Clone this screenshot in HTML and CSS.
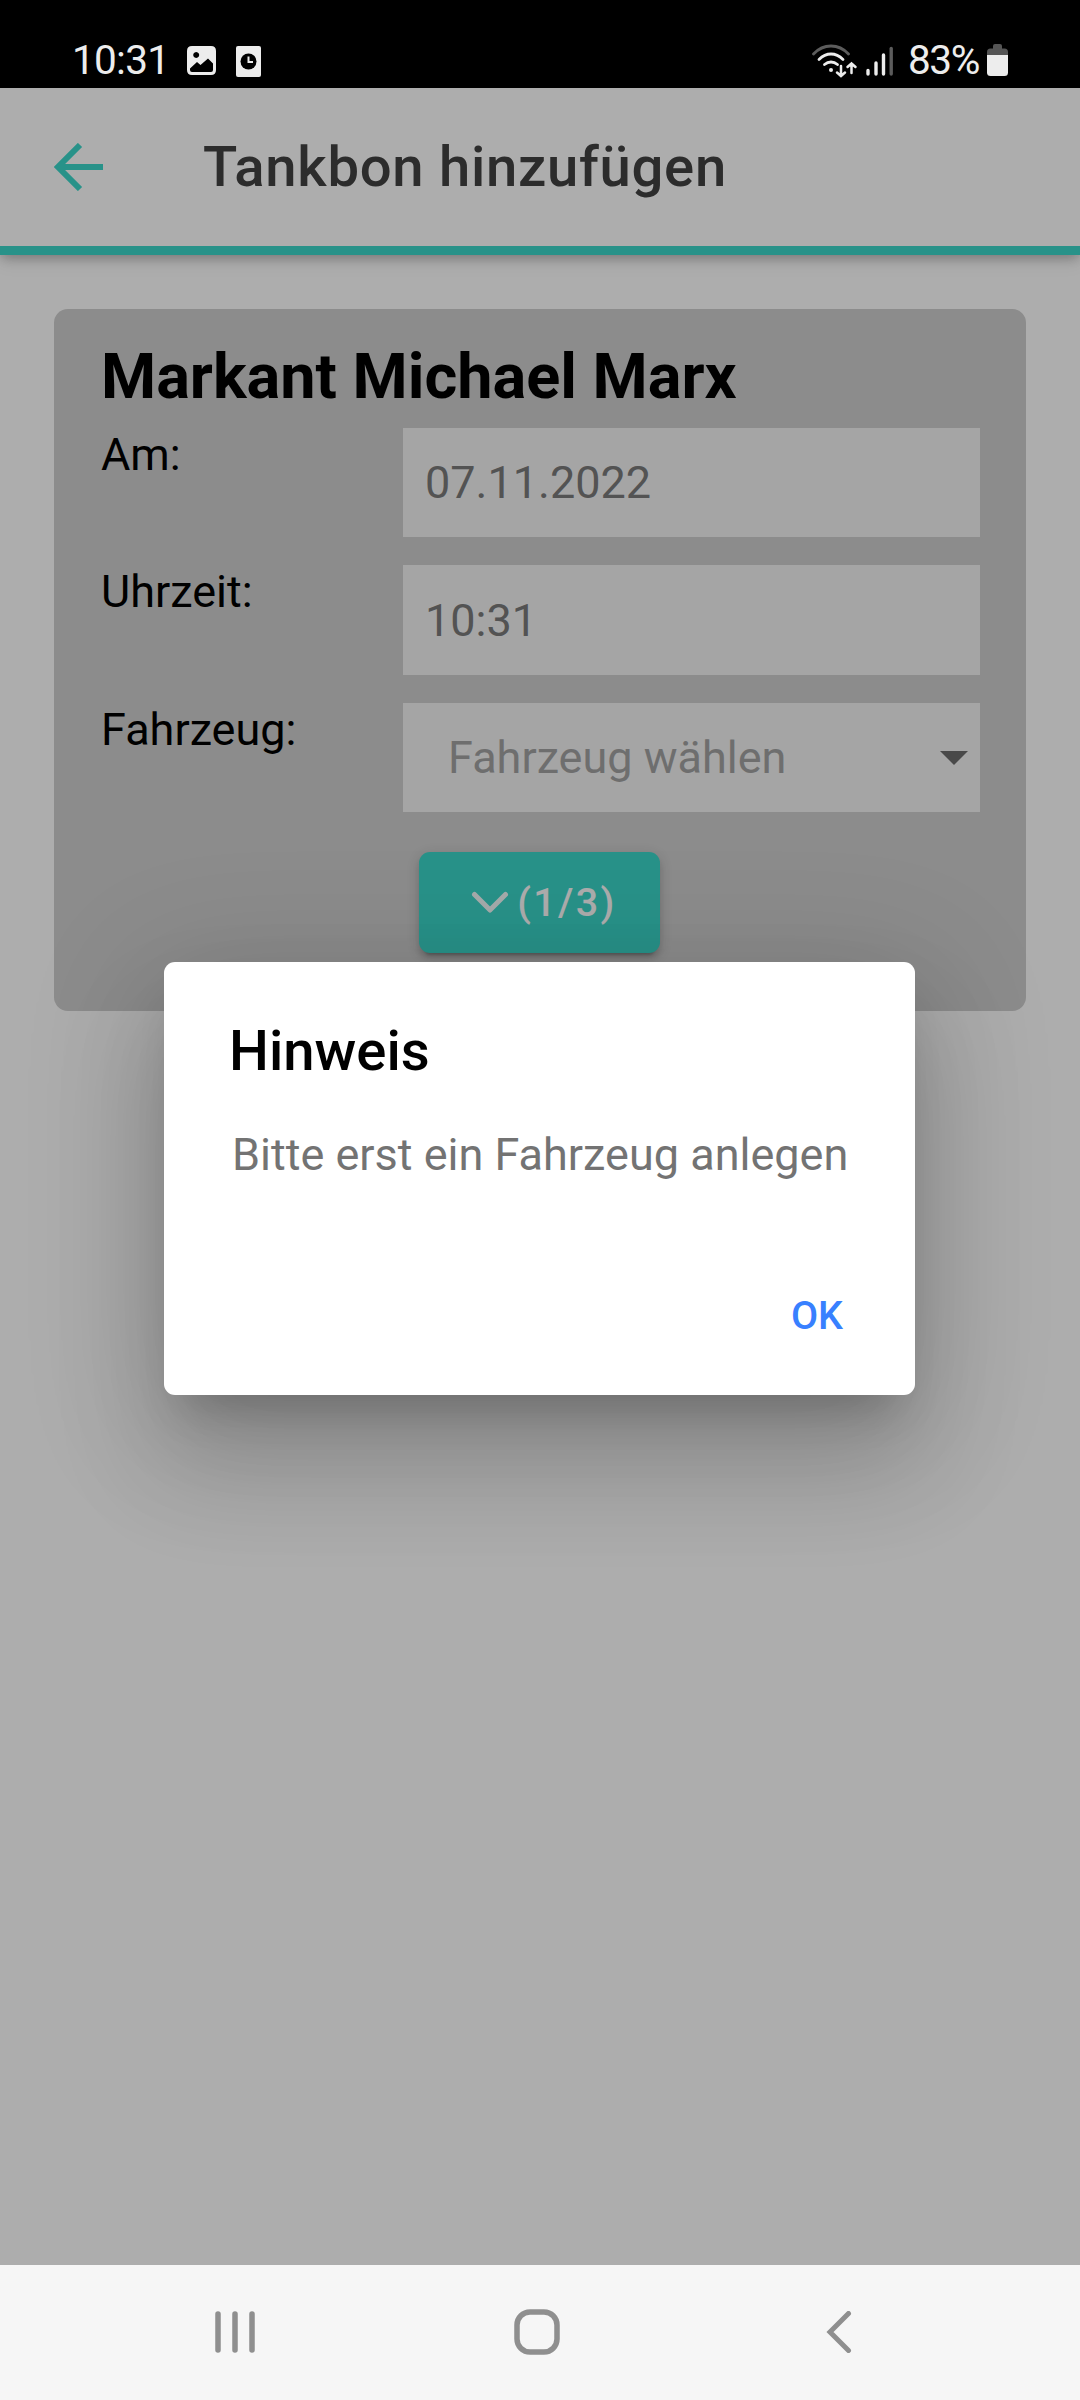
FILE: index.html
```html
<!DOCTYPE html>
<html lang="de">
<head>
<meta charset="utf-8">
<title>Tankbon hinzufügen</title>
<link rel="stylesheet" href="styles.css">
</head>
<body>
<div class="status">
  <span class="status-time">10:31</span>
  <svg class="ic-image" width="29" height="29" viewBox="0 0 29 29">
    <path fill="#ededed" fill-rule="evenodd" d="M5 0H24Q29 0 29 5V24Q29 29 24 29H5Q0 29 0 24V5Q0 0 5 0ZM9.200 6a3 3 0 1 0 .01 0ZM3 22.500L10 16L13.500 19L21 12.500L26 17.500V24Q26 26 24 26H5Q3 26 3 24Z"/>
  </svg>
  <svg class="ic-clock" width="25" height="31" viewBox="0 0 25 31">
    <rect width="25" height="31" rx="2" fill="#ededed"/>
    <circle cx="12.500" cy="15.500" r="8" fill="#000"/>
    <path d="M12.500 10.500V16H17" fill="none" stroke="#ededed" stroke-width="2"/>
  </svg>
  <span class="status-fill"></span>
  <svg class="ic-wifi" width="46" height="34" viewBox="0 0 46 34" fill="none" stroke="#ededed" stroke-width="2.800" stroke-linecap="round">
    <path d="M1.500 10Q9 2 19 2T36.500 10" stroke="#5c5c5c"/>
    <path d="M7 15.500Q12.500 10 19 10T31 15.500"/>
    <path d="M12.500 20.500Q15.500 18 19 18T25.500 20.500"/>
    <circle cx="19" cy="26" r="2" fill="#ededed" stroke="none"/>
    <path d="M29 22V31.500M25 28.500L29 32L33 28.500M39.500 29V19.500M35.500 23L39.500 19.500L43.500 23" stroke-width="2.500"/>
  </svg>
  <svg class="ic-signal" width="28" height="30" viewBox="0 0 28 30" stroke="#ededed" stroke-width="3.400" stroke-linecap="round">
    <path d="M2 24.500V28M10 17V28M17.500 9V28"/>
    <path d="M25.200 2.500V28" stroke="#5c5c5c"/>
  </svg>
  <span class="status-pct">83%</span>
  <svg class="ic-battery" width="21" height="32" viewBox="0 0 21 32">
    <path d="M0 12V8Q0 4.500 3.500 4.500H6V2Q6 0 8 0H13Q15 0 15 2V4.500H17.500Q21 4.500 21 8V12Z" fill="#555"/>
    <path d="M0 11H21V28.500Q21 32 17.500 32H3.500Q0 32 0 28.500Z" fill="#ededed"/>
  </svg>
</div>

<div class="app">
  <header class="toolbar">
    <svg class="ic-back" width="50" height="48" viewBox="0 0 50 48" fill="none" stroke="#3bd8cb" stroke-width="6">
      <path d="M26 2L4 24L26 46M3 24H49"/>
    </svg>
    <h1 class="toolbar-title">Tankbon hinzufügen</h1>
  </header>

  <main class="card">
    <h2 class="card-title">Markant Michael Marx</h2>
    <div class="form">
      <span class="label">Am:</span><div class="field">07.11.2022</div>
      <span class="label">Uhrzeit:</span><div class="field">10:31</div>
      <span class="label">Fahrzeug:</span>
      <div class="field select"><span>Fahrzeug wählen</span>
        <svg width="28" height="14" viewBox="0 0 28 14"><path d="M0 0H28L14 14Z" fill="#6c6c6c"/></svg>
      </div>
    </div>
    <button class="more">
      <svg width="38" height="23" viewBox="0 0 38 23" fill="none" stroke="#fff" stroke-opacity=".95" stroke-width="5" stroke-linecap="round" stroke-linejoin="round"><path d="M3.500 3.500L19 19L34.500 3.500"/></svg>
      <span>(1/3)</span>
    </button>
  </main>

  <div class="backdrop">
    <section class="alert">
      <h2 class="alert-title">Hinweis</h2>
      <p class="alert-text">Bitte erst ein Fahrzeug anlegen</p>
      <button class="alert-ok">OK</button>
    </section>
  </div>
</div>

<nav class="navbar">
  <svg width="40" height="42" viewBox="0 0 40 42" stroke="#8f8f8f" stroke-width="5.500" stroke-linecap="round"><path d="M3 3V39M20 3V39M37 3V39"/></svg>
  <svg class="nav-home" width="46" height="46" viewBox="0 0 46 46"><rect x="3" y="3" width="40" height="40" rx="13" fill="none" stroke="#8f8f8f" stroke-width="5.500"/></svg>
  <svg class="nav-back" width="26" height="42" viewBox="0 0 26 42" fill="none" stroke="#8f8f8f" stroke-width="5" stroke-linecap="round"><path d="M22.500 2.500L4 21L22.500 39.500"/></svg>
</nav>
</body>
</html>
```
FILE: styles.css
```css
* { box-sizing: border-box; }

body {
  margin: 0;
  width: 1080px;
  height: 2400px;
  display: flex;
  flex-direction: column;
  overflow: hidden;
  font-family: Roboto, sans-serif;
  background: #fff;
}

h1, h2, p { margin: 0; font-weight: 500; }
svg { display: block; flex: none; }
button { border: 0; font-family: inherit; }

.status {
  flex: none;
  height: 88px;
  padding: 44px 72px 0 72px;
  display: flex;
  align-items: flex-start;
  background: #000;
  color: #ededed;
  font-size: 40.5px;
  line-height: 48px;
}
.status-time { width: 115px; margin-top: -8px; letter-spacing: -.7px; }
.status-pct { width: 79px; margin-top: -8px; letter-spacing: -1.4px; white-space: nowrap; }
.status-fill { flex: 1; }
.ic-image { margin-top: 2px; }
.ic-clock { margin: 2px 0 0 20px; }
.ic-signal { margin: 2px 14px 0 8px; }

.app {
  position: relative;
  flex: none;
  height: 2177px;
  background: #fff;
}

.toolbar {
  height: 167px;
  padding: 0 54px;
  display: flex;
  align-items: center;
  border-bottom: 9px solid #3bd8cb;
  box-shadow: 0 5px 11px -3px rgba(0, 0, 0, .15), 0 4px 12px rgba(0, 0, 0, .12), 0 2px 22px rgba(0, 0, 0, .1);
}
.toolbar-title {
  margin-left: 99px;
  color: #424242;
  font-size: 56.25px;
  letter-spacing: .7px;
}

.card {
  width: 972px;
  height: 702px;
  margin: 54px auto 0;
  padding: 28px 46px 0;
  border-radius: 14px;
  background: #cecece;
  display: flex;
  flex-direction: column;
}
.card-title {
  height: 91px;
  padding-left: 1px;
  font-size: 63px;
  font-weight: 700;
  line-height: 80px;
}
.form {
  display: grid;
  grid-template-columns: 303px 577px;
  grid-template-rows: 109px 110px 109px;
  row-gap: 28px;
  font-size: 45px;
}
.label { padding-left: 1px; line-height: 54px; }
.field {
  display: flex;
  align-items: center;
  padding: 0 22px;
  background: #f4f4f4;
  color: #7b7b7b;
}
.select { padding: 0 12px 0 45px; justify-content: space-between; color: #a3a3a3; }

.more {
  align-self: center;
  width: 241px;
  height: 101px;
  margin: 40px 1px 0 0;
  padding: 0 0 0 9px;
  display: flex;
  align-items: center;
  justify-content: center;
  gap: 8px;
  border-radius: 11px;
  background: #3bd8cb;
  color: #fff;
  font-size: 39.4px;
  font-weight: 500;
  letter-spacing: 2.36px;
  box-shadow: 0 8px 3px -6px rgba(0, 0, 0, .2), 0 6px 6px rgba(0, 0, 0, .14), 0 3px 14px rgba(0, 0, 0, .12);
}

.backdrop {
  position: absolute;
  inset: 0;
  display: flex;
  align-items: center;
  justify-content: center;
  overflow: hidden;
  background: rgba(0, 0, 0, .32);
}
.alert {
  width: 751px;
  height: 433px;
  margin: 4px 1px 0 0;
  padding: 54px 65px 0;
  display: flex;
  flex-direction: column;
  border-radius: 11px;
  background: #fff;
  box-shadow: 0 31px 42px -20px rgba(0, 0, 0, .2), 0 67px 107px 8px rgba(0, 0, 0, .14), 0 25px 129px 22px rgba(0, 0, 0, .12);
}
.alert-title { font-size: 56.25px; line-height: 70px; }
.alert-text {
  margin: 41px 0 0 3px;
  color: #737373;
  font-size: 45px;
  font-weight: 400;
  line-height: 56px;
  white-space: nowrap;
}
.alert-ok {
  align-self: flex-end;
  margin-top: 109px;
  padding: 0 7px 0 0;
  background: none;
  color: #3880ff;
  font-size: 39.4px;
  font-weight: 500;
  line-height: 48px;
}

.navbar {
  flex: none;
  height: 135px;
  padding: 0 228px 1px 215px;
  display: flex;
  align-items: center;
  background: #f6f6f6;
}
.nav-home { margin-left: 259px; }
.nav-back { margin-left: auto; }
```
